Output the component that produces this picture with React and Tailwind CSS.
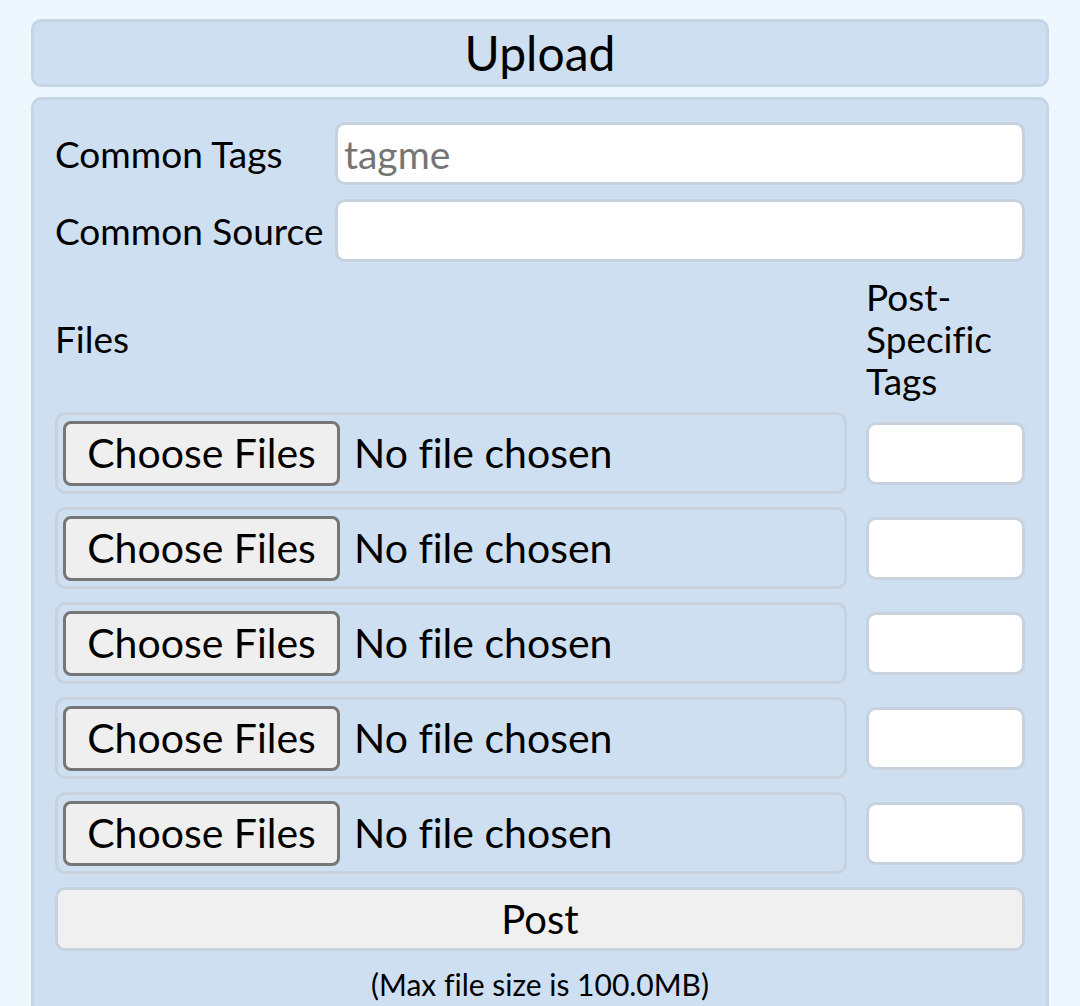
import React from 'react';

const rows = [0, 1, 2, 3, 4];

const App = () => {
  return (
    <div className="min-h-[1006px] bg-[#eef6fe] px-[31px] pt-[19px] text-black [font-variant-ligatures:none]" style={{ fontFamily: 'Lato, "Noto Sans", sans-serif' }}>
      {/* Title */}
      <div className="h-[68px] flex items-center justify-center rounded-[10px] border-[3px] border-[#c4d5e6] bg-[#cddff0]">
        <h1 className="text-[48px] leading-none">Upload</h1>
      </div>

      {/* Form */}
      <div className="mt-[10px] rounded-t-[10px] border-[3px] border-b-0 border-[#c4d5e6] bg-[#cddff0] px-[21px] pt-[22px] pb-[20px]">
        <div className="flex flex-col gap-[14px]">
          <div className="flex items-center">
            <label className="w-[280px] text-[37px] leading-none">Common Tags</label>
            <input
              className="flex-1 h-[63px] rounded-[10px] border-[3px] border-[#c8d2de] bg-white px-[6px] text-[39px] placeholder:text-[#757575] outline-none"
              placeholder="tagme"
            />
          </div>
          <div className="flex items-center">
            <label className="w-[280px] text-[37px] leading-none">Common Source</label>
            <input className="flex-1 h-[63px] rounded-[10px] border-[3px] border-[#c8d2de] bg-white px-[6px] text-[39px] outline-none" />
          </div>
        </div>

        <div className="mt-[14px] grid grid-cols-[1fr_159px] gap-x-[19px]">
          <div className="flex items-center text-[37px]">Files</div>
          <div className="text-[37px] leading-[42px]">Post-<br />Specific<br />Tags</div>
        </div>

        <div className="mt-[10px] flex flex-col gap-[13px]">
          {rows.map((r) => (
            <div key={r} className="grid grid-cols-[1fr_159px] gap-x-[19px] items-center">
              <div className="h-[82px] flex items-center rounded-[10px] border-[3px] border-[#c8d2de] pl-[5px]">
                <div className="h-[65px] w-[277px] flex items-center justify-center rounded-[8px] border-[3px] border-[#767676] bg-[#efefef] text-[41px]">
                  Choose Files
                </div>
                <span className="ml-[14px] text-[41px]">No file chosen</span>
              </div>
              <input className="h-[63px] w-full rounded-[10px] border-[3px] border-[#c8d2de] bg-white outline-none" />
            </div>
          ))}
        </div>

        <button className="mt-[13px] w-full h-[64px] rounded-[10px] border-[3px] border-[#c8d2de] bg-[#f0f0f0] text-[40px] leading-none">
          Post
        </button>

        <p className="mt-[18px] text-center text-[30px] leading-none">(Max file size is 100.0MB)</p>
      </div>
    </div>
  );
};

export default App;
